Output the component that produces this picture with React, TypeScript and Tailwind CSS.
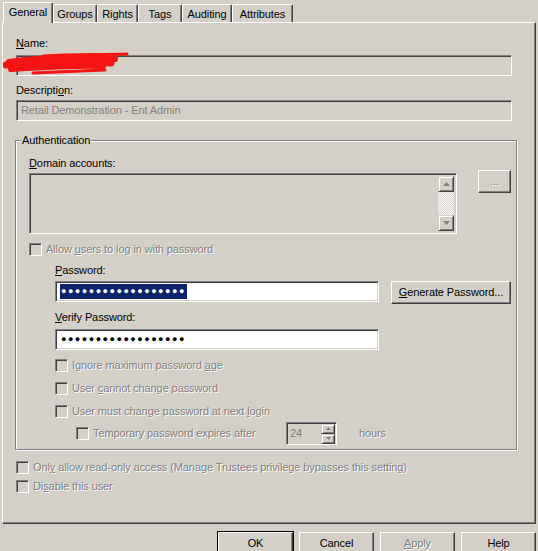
import { FC, ReactNode } from 'react';

const sunken =
  'border border-t-[#808080] border-l-[#808080] border-r-white border-b-white shadow-[inset_1px_1px_0_#404040,inset_-1px_-1px_0_#d4d0c8]';
const raised =
  'border border-t-white border-l-white border-r-[#404040] border-b-[#404040] shadow-[inset_-1px_-1px_0_#808080]';
const dim = 'text-[#808080] [text-shadow:1px_1px_0_#fff]';

const Check: FC = () => <span className={`w-[13px] h-[13px] shrink-0 bg-[#d4d0c8] ${sunken}`} />;

const CheckRow: FC<{ children: ReactNode; className?: string }> = ({ children, className = '' }) => (
  <div className={`flex items-center gap-[4px] h-[13px] ${className}`}>
    <Check />
    <span className={`whitespace-nowrap ${dim}`}>{children}</span>
  </div>
);

const Button: FC<{ children: ReactNode; className?: string }> = ({ children, className = '' }) => (
  <button type="button" className={`flex items-center justify-center bg-[#d4d0c8] ${raised} ${className}`}>
    {children}
  </button>
);

const Arrow: FC<{ up?: boolean; small?: boolean }> = ({ up, small }) => (
  <div
    className={`flex items-center justify-center border border-t-[#d4d0c8] border-l-[#d4d0c8] border-r-[#404040] border-b-[#404040] shadow-[inset_1px_1px_0_#fff,inset_-1px_-1px_0_#808080] ${
      small ? 'w-[14px] h-[10px]' : 'w-[16px] h-[16px]'
    }`}
  >
    <svg width={small ? 5 : 7} height={small ? 3 : 4} viewBox="0 0 7 4">
      <polygon points={up ? '3.5,0 7,4 0,4' : '0,0 7,0 3.5,4'} fill="#808080" />
    </svg>
  </div>
);

const Dots: FC<{ selected?: boolean }> = ({ selected }) => (
  <span
    className={`text-[9px] tracking-[1.5px] leading-[15px] px-[1px] ${
      selected ? 'bg-[#0a246a] text-white' : 'text-black'
    }`}
  >
    {'●'.repeat(18)}
  </span>
);

const tabs = [
  { label: 'General', w: 'w-[50px]' },
  { label: 'Groups', w: 'w-[44px]' },
  { label: 'Rights', w: 'w-[41px]' },
  { label: 'Tags', w: 'w-[44px]' },
  { label: 'Auditing', w: 'w-[50px]' },
  { label: 'Attributes', w: 'w-[61px]' }
];

const App: FC = () => {
  return (
    <div className="relative w-[538px] h-[551px] overflow-hidden bg-[#d4d0c8] text-black text-[11px] leading-[13px] tracking-[-0.1px] font-['Liberation_Sans',Arial,sans-serif]">
      {/* tab strip */}
      <div className="flex items-end h-[22px] pl-[3px]">
        {tabs.map((t, i) =>
          i === 0 ? (
            <div
              key={t.label}
              className={`${t.w} h-[21px] -mb-px relative z-10 bg-[#d4d0c8] rounded-t-[2px] border-t border-l border-r border-t-white border-l-white border-r-[#404040] shadow-[inset_-1px_0_0_#808080] flex justify-center pt-[3px]`}
            >
              {t.label}
            </div>
          ) : (
            <div
              key={t.label}
              className={`${t.w} h-[18px] rounded-t-[2px] border-t border-l border-r border-t-white border-l-white border-r-[#404040] shadow-[inset_-1px_0_0_#808080] flex justify-center pt-[3px]`}
            >
              {t.label}
            </div>
          )
        )}
      </div>

      {/* tab page */}
      <div className="ml-[2px] w-[534px] h-[502px] border border-t-white border-l-white border-r-[#404040] border-b-[#404040] shadow-[inset_-1px_-1px_0_#808080] pt-[14px] pl-[13px]">
        <div className="h-[13px]">
          <u>N</u>ame:
        </div>
        <div className={`mt-[5px] w-[496px] h-[21px] ${sunken}`} />

        <div className="mt-[8px] h-[13px]">
          Descripti<u>o</u>n:
        </div>
        <div className={`mt-[3px] w-[496px] h-[21px] flex items-center pl-[4px] ${sunken}`}>
          <span className="text-[#808080]">Retail Demonstration - Ent Admin</span>
        </div>

        <fieldset className="mt-[13px] -ml-px w-[502px] border border-[#808080] shadow-[1px_1px_0_#fff,inset_1px_1px_0_#fff] pl-[13px] pb-[4px]">
          <legend className="-ml-[8px] px-[1px] bg-[#d4d0c8] h-[13px]">Authentication</legend>

          <div className="mt-[10px] h-[13px]">
            <u>D</u>omain accounts:
          </div>
          <div className="mt-[3px] flex items-start gap-[21px]">
            <div className={`w-[428px] h-[61px] flex justify-end ${sunken} p-[2px]`}>
              <div className="flex flex-col w-[16px]">
                <Arrow up />
                <div className="flex-1 bg-[repeating-conic-gradient(#fff_0_25%,#d4d0c8_0_50%)] bg-[length:2px_2px]" />
                <Arrow />
              </div>
            </div>
            <Button className="-mt-[3px] w-[33px] h-[23px]">
              <span className={dim}>...</span>
            </Button>
          </div>

          <CheckRow className="mt-[9px]">
            Allow <u>u</u>sers to log in with password
          </CheckRow>

          <div className="ml-[26px]">
            <div className="mt-[8px] h-[13px]">
              <u>P</u>assword:
            </div>
            <div className="mt-[4px] flex items-start gap-[12px]">
              <div className={`w-[324px] h-[21px] bg-white flex items-center pl-[4px] ${sunken}`}>
                <Dots selected />
              </div>
              <Button className="w-[120px] h-[23px]">
                <span>
                  <u>G</u>enerate Password...
                </span>
              </Button>
            </div>

            <div className="mt-[7px] h-[13px]">
              <u>V</u>erify Password:
            </div>
            <div className={`mt-[5px] w-[324px] h-[21px] bg-white flex items-center pl-[4px] ${sunken}`}>
              <Dots />
            </div>

            <CheckRow className="mt-[9px]">
              Ignore maximum password <u>a</u>ge
            </CheckRow>
            <CheckRow className="mt-[10px]">
              User <u>c</u>annot change password
            </CheckRow>
            <CheckRow className="mt-[10px]">
              User must change password at next <u>l</u>ogin
            </CheckRow>

            <div className="mt-[4px] ml-[21px] flex items-center h-[23px]">
              <Check />
              <span className={`ml-[4px] w-[193px] whitespace-nowrap ${dim}`}>Temporary password expires after</span>
              <div className={`w-[51px] h-[23px] flex items-center justify-between pl-[3px] pr-[1px] ${sunken}`}>
                <span className="text-[#808080]">24</span>
                <div className="flex flex-col">
                  <Arrow up small />
                  <Arrow small />
                </div>
              </div>
              <span className={`ml-[22px] ${dim}`}>hours</span>
            </div>
          </div>
        </fieldset>

        <CheckRow className="mt-[11px]">
          Onl<u>y</u> allow read-only access (Manage Trustees privilege bypasses this setting)
        </CheckRow>
        <CheckRow className="mt-[6px]">
          Di<u>s</u>able this user
        </CheckRow>
      </div>

      {/* dialog buttons */}
      <div className="mt-[8px] flex gap-[6px] pl-[218px]">
        <Button className="w-[75px] h-[23px] outline outline-1 outline-black">OK</Button>
        <Button className="w-[75px] h-[23px]">Cancel</Button>
        <Button className="w-[75px] h-[23px]">
          <span className={dim}>
            <u>A</u>pply
          </span>
        </Button>
        <Button className="w-[75px] h-[23px]">Help</Button>
      </div>

      {/* red scribble over the name */}
      <svg className="absolute left-[3px] top-[52px]" width="128" height="24" viewBox="0 0 128 24">
        <g fill="none" stroke="#f41414" strokeLinecap="round">
          <path d="M40 4 C70 2 100 3 124 2" strokeWidth="3" />
          <path d="M6 10 C30 6 70 5 112 7" strokeWidth="6" />
          <path d="M3 13 C40 10 80 9 108 11" strokeWidth="7" />
          <path d="M8 17 C40 15 70 13 100 14" strokeWidth="6" />
          <path d="M30 21 C55 20 80 19 102 18" strokeWidth="3" />
        </g>
      </svg>
    </div>
  );
};

export default App;
